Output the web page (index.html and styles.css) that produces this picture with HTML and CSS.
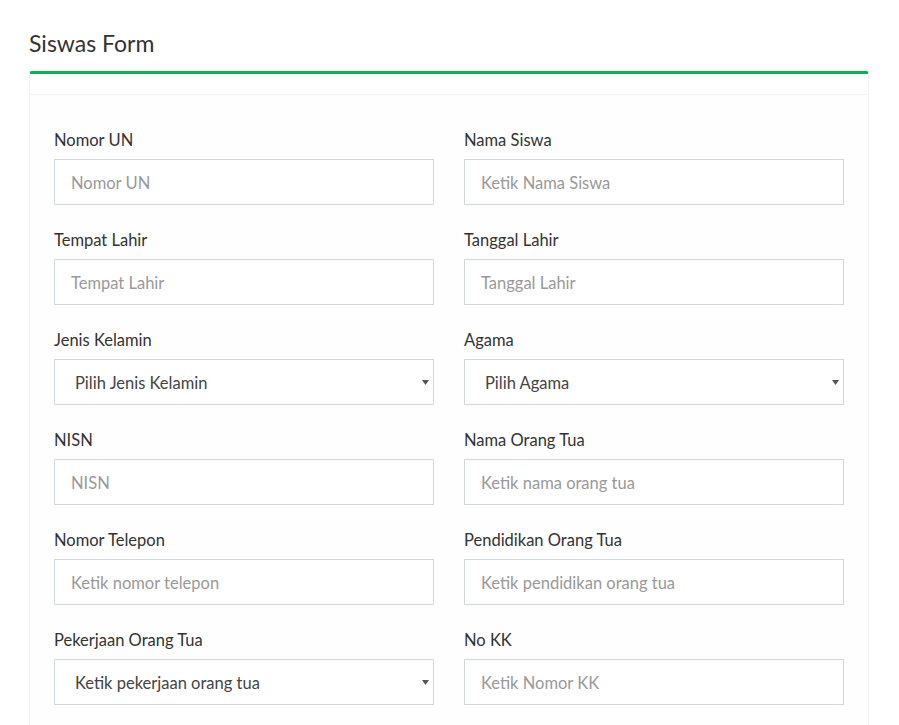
FILE: index.html
```html
<!DOCTYPE html>
<html lang="id">
<head>
<meta charset="utf-8">
<title>Siswas Form</title>
<link rel="stylesheet" href="styles.css">
</head>
<body>
<div class="page">
  <h3 class="title">Siswas Form</h3>
  <div class="card">
    <div class="card-header"></div>
    <div class="card-body">
      <div class="grid">
        <div class="group">
          <label class="label">Nomor UN</label>
          <input class="control" type="text" placeholder="Nomor UN">
        </div>
        <div class="group">
          <label class="label">Nama Siswa</label>
          <input class="control" type="text" placeholder="Ketik Nama Siswa">
        </div>
        <div class="group">
          <label class="label">Tempat Lahir</label>
          <input class="control" type="text" placeholder="Tempat Lahir">
        </div>
        <div class="group">
          <label class="label">Tanggal Lahir</label>
          <input class="control" type="text" placeholder="Tanggal Lahir">
        </div>
        <div class="group">
          <label class="label">Jenis Kelamin</label>
          <div class="select-wrap">
            <select class="control select"><option>Pilih Jenis Kelamin</option></select>
            <svg class="caret" width="7" height="5" viewBox="0 0 7 5"><path d="M0 0h7L3.5 5z" fill="#555"/></svg>
          </div>
        </div>
        <div class="group">
          <label class="label">Agama</label>
          <div class="select-wrap">
            <select class="control select"><option>Pilih Agama</option></select>
            <svg class="caret" width="7" height="5" viewBox="0 0 7 5"><path d="M0 0h7L3.5 5z" fill="#555"/></svg>
          </div>
        </div>
        <div class="group">
          <label class="label">NISN</label>
          <input class="control" type="text" placeholder="NISN">
        </div>
        <div class="group">
          <label class="label">Nama Orang Tua</label>
          <input class="control" type="text" placeholder="Ketik nama orang tua">
        </div>
        <div class="group">
          <label class="label">Nomor Telepon</label>
          <input class="control" type="text" placeholder="Ketik nomor telepon">
        </div>
        <div class="group">
          <label class="label">Pendidikan Orang Tua</label>
          <input class="control" type="text" placeholder="Ketik pendidikan orang tua">
        </div>
        <div class="group">
          <label class="label">Pekerjaan Orang Tua</label>
          <div class="select-wrap">
            <select class="control select"><option>Ketik pekerjaan orang tua</option></select>
            <svg class="caret" width="7" height="5" viewBox="0 0 7 5"><path d="M0 0h7L3.5 5z" fill="#555"/></svg>
          </div>
        </div>
        <div class="group">
          <label class="label">No KK</label>
          <input class="control" type="text" placeholder="Ketik Nomor KK">
        </div>
      </div>
    </div>
  </div>
</div>
</body>
</html>
```

FILE: styles.css
```css
* { box-sizing: border-box; }
html, body { margin: 0; padding: 0; background: #fff; }
body {
  font-family: Lato, "Open Sans", sans-serif;
  color: #333;
}
.page {
  padding: 0 30px 0 29px;
}
.title {
  margin: 0;
  padding-top: 30px;
  height: 71px;
  font-size: 23px;
  line-height: 26px;
  font-weight: 400;
  color: #333;
}
.card {
  border-top: 3px solid #0ab154;
  border-left: 1px solid #f5f5f5;
  border-right: 1px solid #f5f5f5;
  border-radius: 3px 3px 0 0;
  background: #fefefe;
}
.card-header {
  height: 21px;
  border-bottom: 1px solid #f2f2f2;
  background: #fff;
}
.card-body {
  padding: 35px 24px 20px 24px;
}
.grid {
  display: grid;
  grid-template-columns: 380px 380px;
  column-gap: 30px;
  row-gap: 25px;
}
.group {
  display: flex;
  flex-direction: column;
}
.label {
  font-size: 16.5px;
  line-height: 20px;
  font-weight: 400;
  color: #333;
  margin-bottom: 9px;
}
.control {
  width: 380px;
  height: 46px;
  border: 1px solid #d2d6de;
  border-radius: 0;
  background: #fff;
  padding: 2px 16px 0 16px;
  font-family: Lato, "Open Sans", sans-serif;
  font-size: 16.5px;
  color: #555;
  outline: none;
}
.control::placeholder { color: #999; }
.select-wrap { position: relative; }
.select {
  appearance: none;
  -webkit-appearance: none;
  padding-left: 20px;
  color: #444;
}
.caret {
  position: absolute;
  right: 5px;
  top: 21px;
}
```
